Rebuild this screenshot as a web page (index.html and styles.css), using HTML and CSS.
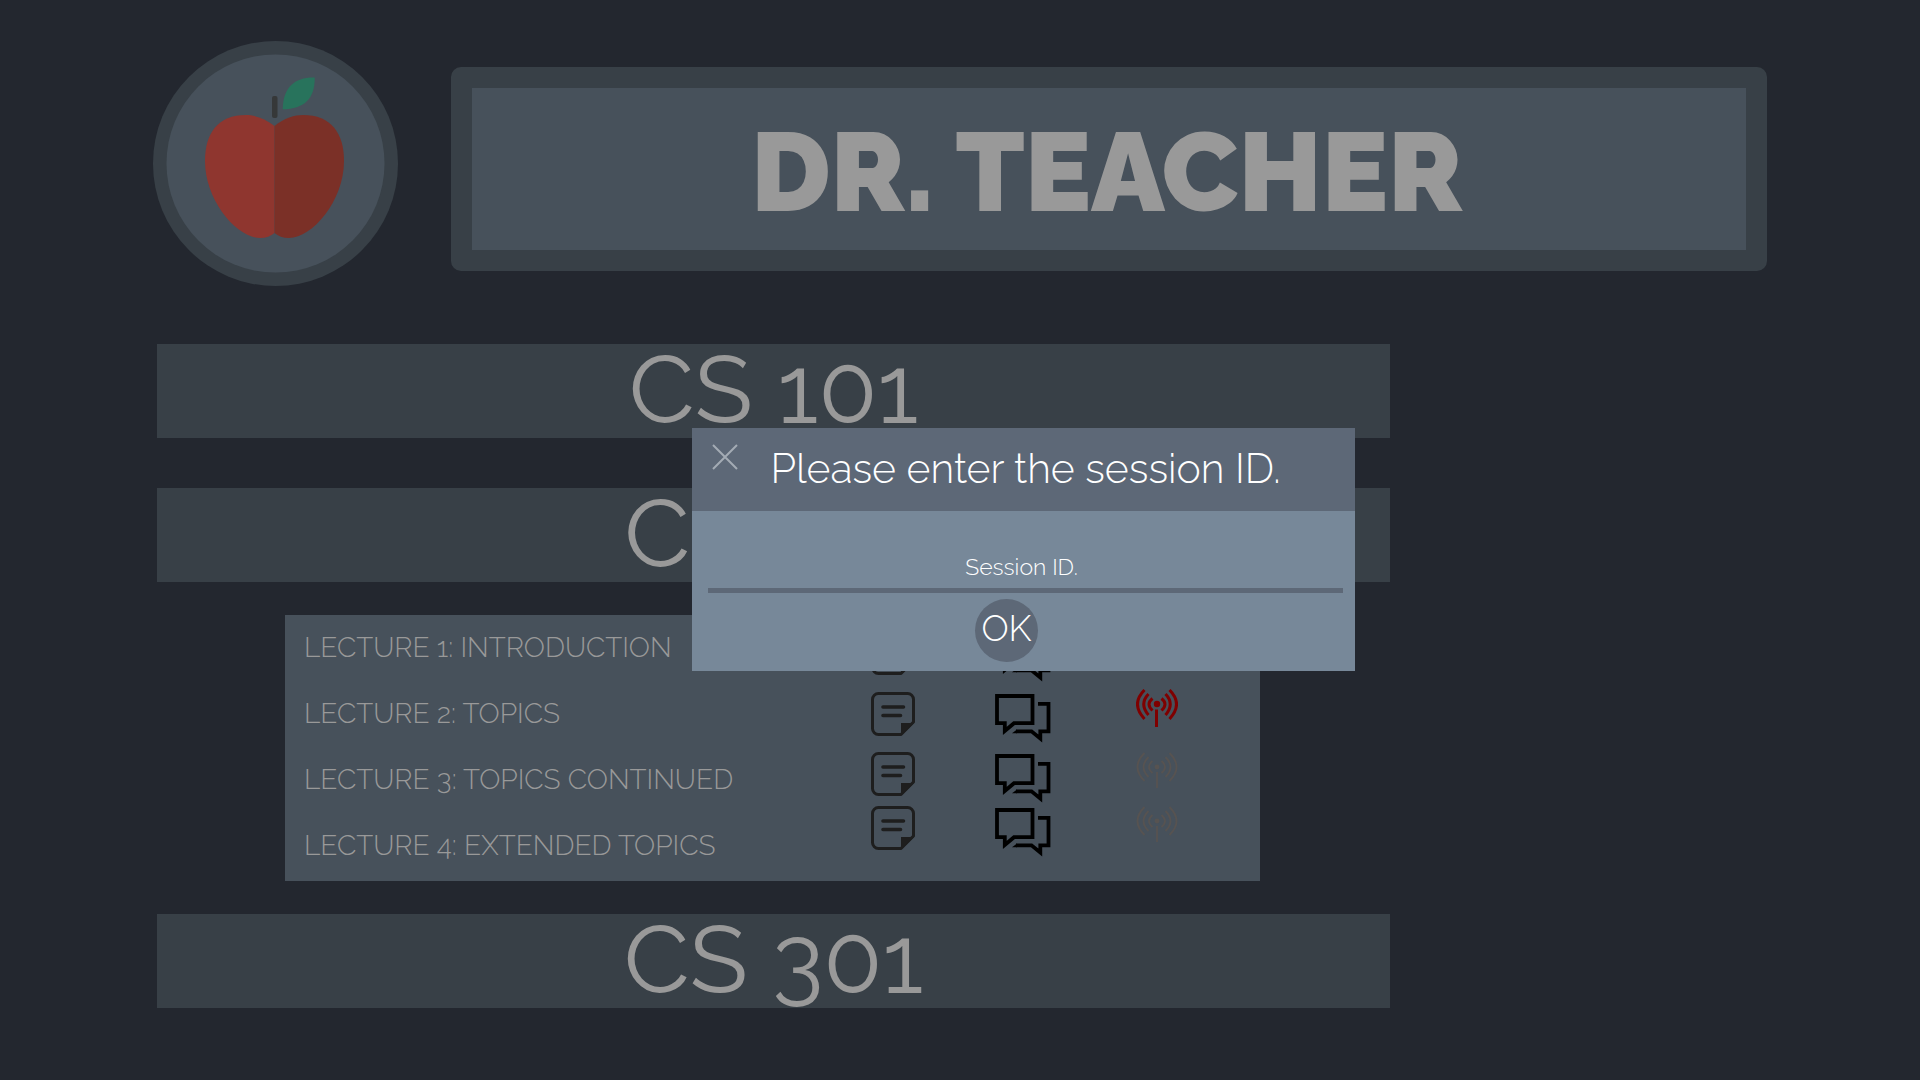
FILE: index.html
```html
<!DOCTYPE html>
<html lang="en">
<head>
<meta charset="utf-8">
<title>Dr. Teacher</title>
<link rel="stylesheet" href="styles.css">
</head>
<body>
<svg class="sprite" aria-hidden="true">
  <symbol id="note" viewBox="0 0 44 47">
    <path d="M30 45.500H7.500a6 6 0 0 1-6-6V10.500a6 6 0 0 1 6-6h29a6 6 0 0 1 6 6V33Z" fill="none" stroke="currentColor" stroke-width="3" stroke-linejoin="round"/>
    <path d="M30 34H43L30 46.500Z" fill="currentColor"/>
    <path d="M12 18H32.500M12 26.500H29.500" stroke="currentColor" stroke-width="3.600" stroke-linecap="round"/>
  </symbol>
  <symbol id="chat" viewBox="0 0 56 54">
    <path d="M2 7H37.500V34.200H19L9.800 42V34.200H2Z" fill="none" stroke="currentColor" stroke-width="3.800"/>
    <path d="M43 14.800H53.500V42.300H45.300V49.500L36.500 42.300H21" fill="none" stroke="currentColor" stroke-width="3.800"/>
    <path d="M17 44.200L22 40.400V44.200Z" fill="currentColor"/>
  </symbol>
  <symbol id="signal" viewBox="0 0 42 44">
    <g fill="none" stroke="currentColor" stroke-width="1.800">
      <path d="M8.500 4Q-5.500 18 8.500 32M12.500 8Q2.500 18 12.500 28M16.500 12Q9.500 18 16.500 24"/>
      <path d="M33.500 4Q47.500 18 33.500 32M29.500 8Q39.500 18 29.500 28M25.500 12Q32.500 18 25.500 24"/>
      <path d="M21 23V39"/>
    </g>
    <circle cx="21" cy="18" r="2.400" fill="currentColor"/>
  </symbol>
  <symbol id="signal-live" viewBox="0 0 42 44">
    <g fill="none" stroke="currentColor" stroke-width="3">
      <path d="M8.500 1Q-5.500 15 8.500 30M12.500 5Q3 15 12.500 26M16.500 9.500Q9.500 15 16.500 21.500"/>
      <path d="M33.500 1Q47.500 15 33.500 30M29.500 5Q39 15 29.500 26M25.500 9.500Q32.500 15 25.500 21.500"/>
      <path d="M20.500 20.500V38"/>
    </g>
    <circle cx="21" cy="15" r="3.200" fill="currentColor"/>
  </symbol>
</svg>

<header class="header">
  <svg class="avatar" viewBox="0 0 245 245" role="img" aria-label="Apple">
    <circle class="avatar-ring" cx="122.500" cy="122.500" r="122.500"/>
    <circle class="avatar-disc" cx="122.500" cy="122.500" r="109"/>
    <path class="apple-light" d="M121.500 85C112 77 101 74 93 74C65 74 52 92 52 120C52 160 84 197 107 197C113 197 118 195 121.500 192Z"/>
    <path class="apple-dark" d="M121.500 85C131 77 142 74 150 74C178 74 191 92 191 120C191 160 159 197 136 197C130 197 125 195 121.500 192Z"/>
    <rect class="apple-stem" x="119" y="55" width="5.500" height="22" rx="2"/>
    <path class="apple-leaf" d="M161.700 36.500C142 36 130 46 129.700 68.300C151 68 162 58 161.700 36.500Z"/>
  </svg>
  <div class="banner"><h1 class="banner-title">DR. TEACHER</h1></div>
</header>

<main class="courses">
  <button class="course" type="button">CS 101</button>
  <button class="course" type="button">CS 201</button>
  <section class="lectures" aria-label="CS 201 lectures">
    <ul class="lecture-names">
      <li>LECTURE 1: INTRODUCTION</li>
      <li>LECTURE 2: TOPICS</li>
      <li>LECTURE 3: TOPICS CONTINUED</li>
      <li>LECTURE 4: EXTENDED TOPICS</li>
    </ul>
    <div class="lecture-tools">
      <button class="tool tool-note" type="button" aria-label="Notes 1"><svg width="44" height="47"><use href="#note"/></svg></button>
      <button class="tool tool-chat" type="button" aria-label="Chat 1"><svg width="56" height="54"><use href="#chat"/></svg></button>
      <button class="tool tool-signal" type="button" aria-label="Session 1"><svg width="42" height="44"><use href="#signal"/></svg></button>
      <button class="tool tool-note" type="button" aria-label="Notes 2"><svg width="44" height="47"><use href="#note"/></svg></button>
      <button class="tool tool-chat" type="button" aria-label="Chat 2"><svg width="56" height="54"><use href="#chat"/></svg></button>
      <button class="tool tool-live" type="button" aria-label="Live session 2"><svg width="42" height="44"><use href="#signal-live"/></svg></button>
      <button class="tool tool-note" type="button" aria-label="Notes 3"><svg width="44" height="47"><use href="#note"/></svg></button>
      <button class="tool tool-chat" type="button" aria-label="Chat 3"><svg width="56" height="54"><use href="#chat"/></svg></button>
      <button class="tool tool-signal" type="button" aria-label="Session 3"><svg width="42" height="44"><use href="#signal"/></svg></button>
      <button class="tool tool-note" type="button" aria-label="Notes 4"><svg width="44" height="47"><use href="#note"/></svg></button>
      <button class="tool tool-chat" type="button" aria-label="Chat 4"><svg width="56" height="54"><use href="#chat"/></svg></button>
      <button class="tool tool-signal" type="button" aria-label="Session 4"><svg width="42" height="44"><use href="#signal"/></svg></button>
    </div>
  </section>
  <button class="course" type="button">CS 301</button>
</main>

<form class="dialog" role="dialog" aria-labelledby="dialog-title">
  <div class="dialog-head">
    <button class="dialog-close" type="button" aria-label="Close">
      <svg width="26" height="26" viewBox="0 0 26 26"><path d="M1 1L25 25M25 1L1 25" stroke="currentColor" stroke-width="2"/></svg>
    </button>
    <h2 class="dialog-title" id="dialog-title">Please enter the session ID.</h2>
  </div>
  <div class="dialog-body">
    <input class="dialog-input" type="text" aria-label="Session ID" placeholder="Session ID.">
    <button class="dialog-ok" type="submit">OK</button>
  </div>
</form>
</body>
</html>
```
FILE: styles.css
```css
* {
  box-sizing: border-box;
}

body {
  position: relative;
  margin: 0;
  min-height: 100vh;
  background: #23272f;
  color: #999;
  font-family: Raleway, Lato, sans-serif;
}

button,
input {
  margin: 0;
  padding: 0;
  border: 0;
  background: none;
  color: inherit;
  font: inherit;
}

button {
  cursor: pointer;
}

.sprite {
  display: none;
}

/* Header */

.header {
  display: flex;
  gap: 53px;
  padding: 41px 153px 58px;
}

.avatar {
  flex: none;
  width: 245px;
  height: 245px;
}

.avatar-ring { fill: #384047; }
.avatar-disc { fill: #47515b; }
.apple-light { fill: #8f362f; }
.apple-dark { fill: #7b3027; }
.apple-stem { fill: #363839; }
.apple-leaf { fill: #28735c; }

.banner {
  flex: 1;
  display: flex;
  align-items: center;
  justify-content: center;
  margin: 26px 0 15px;
  border: 21px solid #384047;
  border-radius: 10px;
  background: #47515b;
}

.banner-title {
  margin: 0;
  padding: 6px 4px 0 0;
  font-size: 111px;
  line-height: 120px;
  font-weight: 900;
}

/* Courses */

.courses {
  display: flex;
  flex-direction: column;
  margin: 0 530px 72px 157px;
}

.course {
  height: 94px;
  padding-bottom: 4px;
  background: #384047;
  font-size: 96px;
  line-height: 84px;
  text-align: center;
}

.course + .course {
  margin-top: 50px;
}

.lectures {
  display: flex;
  justify-content: space-between;
  margin: 33px 130px 33px 128px;
  background: #47515b;
}

.lecture-names {
  margin: 0;
  padding: 0 0 2px 19px;
  list-style: none;
  font-size: 28px;
  line-height: 66px;
  font-weight: 300;
}

.lecture-tools {
  display: grid;
  grid-template-columns: 124px 141px 124px;
  grid-template-rows: 61px 60px 54px 54px;
  place-items: start;
  padding-top: 13px;
}

.tool svg {
  display: block;
}

.tool-note { color: #1e1e1e; }
.tool-chat { color: #000; }
.tool-signal { color: #575351; }
.tool-live { color: #7f0000; }

/* Session dialog */

.dialog {
  position: absolute;
  top: 428px;
  right: 565px;
  width: 663px;
  background: #778899;
  color: #fff;
  font-weight: 300;
}

.dialog-head {
  position: relative;
  padding: 15px 0 16px 4px;
  background: #5d6877;
}

.dialog-close {
  position: absolute;
  top: 16px;
  left: 20px;
  color: #a3abb4;
}

.dialog-close svg {
  display: block;
}

.dialog-title {
  margin: 0;
  font-size: 41px;
  line-height: 52px;
  font-weight: 300;
  text-align: center;
}

.dialog-body {
  display: flex;
  flex-direction: column;
  align-items: center;
  gap: 6px;
  padding: 36px 12px 9px 16px;
}

.dialog-input {
  width: 100%;
  height: 46px;
  padding: 0 8px 3px 0;
  border-bottom: 5px solid #5d6877;
  font-size: 23px;
  text-align: center;
  outline: 0;
}

.dialog-input::placeholder {
  color: #fff;
  opacity: 1;
}

.dialog-ok {
  width: 63px;
  height: 63px;
  margin-right: 38px;
  padding-bottom: 5px;
  border-radius: 50%;
  background: #5d6877;
  font-size: 36px;
}
```
